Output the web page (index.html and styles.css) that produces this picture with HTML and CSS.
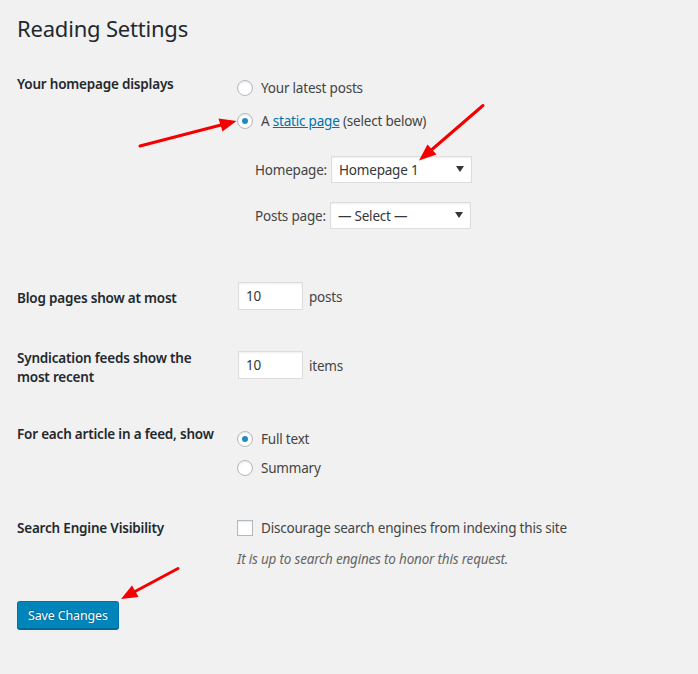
FILE: index.html
```html
<!DOCTYPE html>
<html lang="en">
<head>
<meta charset="utf-8">
<title>Reading Settings</title>
<link rel="stylesheet" href="styles.css">
</head>
<body>
<div class="wrap">
  <h1 class="title">Reading Settings</h1>
  <form class="form">
    <div class="row row-1">
      <div class="th">Your homepage displays</div>
      <div class="td">
        <label class="choice"><span class="radio"></span><span>Your latest posts</span></label>
        <label class="choice choice-2"><span class="radio checked"></span><span>A <a href="#" class="link">static page</a> (select below)</span></label>
        <div class="sel-row sel-row-1">
          <span class="sel-label">Homepage:</span>
          <div class="select"><span>Homepage 1</span><svg class="caret" width="8" height="6" viewBox="0 0 8 6"><path d="M0 0H8L4 6Z" fill="#32373c"/></svg></div>
        </div>
        <div class="sel-row sel-row-2">
          <span class="sel-label">Posts page:</span>
          <div class="select select-2"><span>— Select —</span><svg class="caret" width="8" height="6" viewBox="0 0 8 6"><path d="M0 0H8L4 6Z" fill="#32373c"/></svg></div>
        </div>
      </div>
    </div>
    <div class="row row-2">
      <div class="th">Blog pages show at most</div>
      <div class="td inline"><span class="num">10</span><span class="unit">posts</span></div>
    </div>
    <div class="row row-3">
      <div class="th th-2line">Syndication feeds show the most recent</div>
      <div class="td inline"><span class="num">10</span><span class="unit">items</span></div>
    </div>
    <div class="row row-4">
      <div class="th">For each article in a feed, show</div>
      <div class="td">
        <label class="choice"><span class="radio checked"></span><span>Full text</span></label>
        <label class="choice choice-s"><span class="radio"></span><span>Summary</span></label>
      </div>
    </div>
    <div class="row row-5">
      <div class="th">Search Engine Visibility</div>
      <div class="td">
        <label class="choice"><span class="checkbox"></span><span>Discourage search engines from indexing this site</span></label>
        <p class="desc">It is up to search engines to honor this request.</p>
      </div>
    </div>
    <div class="submit"><span class="button">Save Changes</span></div>
  </form>
</div>
<svg class="arrows" width="698" height="674" viewBox="0 0 698 674">
  <g stroke="#f40000" stroke-width="3" stroke-linecap="round" fill="none">
    <line x1="140" y1="146" x2="221" y2="125"/>
    <line x1="483" y1="105.5" x2="432" y2="149.5"/>
    <line x1="178" y1="568.5" x2="135" y2="591.5"/>
  </g>
  <g fill="#f40000">
    <polygon points="236.5,121 222.5,131.5 218.5,118.5"/>
    <polygon points="419,160.5 436.5,154.5 427.5,144.5"/>
    <polygon points="121,599 138.5,597 132,585.5"/>
  </g>
</svg>
</body>
</html>
```
FILE: styles.css
```css
html, body {
  margin: 0;
  padding: 0;
}
body {
  background: #f1f1f1;
  font-family: "Noto Sans", "Open Sans", sans-serif;
  font-size: 13.5px;
  letter-spacing: -0.2px;
  line-height: 20px;
  color: #444;
  width: 698px;
  height: 674px;
  overflow: hidden;
  position: relative;
}
.wrap {
  padding: 0 17px;
}
.title {
  margin: 14px 0 0;
  font-size: 22px;
  letter-spacing: -0.2px;
  line-height: 29px;
  font-weight: 400;
  color: #23282d;
}
.form {
  margin: 0;
}
.row {
  display: grid;
  grid-template-columns: 220px 1fr;
  align-items: start;
}
.th {
  font-weight: 600;
  color: #23282d;
}
.th-2line {
  line-height: 19px;
  width: 190px;
}
.row-1 { margin-bottom: 33px; }
.row-1 .th { padding-top: 31px; }
.row-1 .td { padding-top: 35px; }
.row-2 { margin-bottom: 17px; }
.row-2 .th { padding-top: 26px; }
.row-2 .td { padding-top: 20px; }
.row-3 { margin-bottom: 18px; }
.row-3 .th { padding-top: 22px; }
.row-3 .td { padding-top: 24px; }
.row-4 { margin-bottom: 19px; }
.row-4 .th { padding-top: 19px; }
.row-4 .td { padding-top: 24px; }
.row-5 .th { padding-top: 21px; }
.row-5 .td { padding-top: 21px; }

.choice {
  display: flex;
  align-items: center;
  gap: 8px;
  height: 20px;
}
.choice-2 { margin-top: 13px; }
.choice-s { margin-top: 9px; }

.radio {
  box-sizing: border-box;
  width: 16px;
  height: 16px;
  border: 1px solid #b4b9be;
  border-radius: 50%;
  background: #fff;
  box-shadow: inset 0 1px 2px rgba(0, 0, 0, 0.1);
  display: flex;
  align-items: center;
  justify-content: center;
  flex: none;
}
.radio.checked::before {
  content: "";
  width: 6px;
  height: 6px;
  border-radius: 50%;
  background: #1e8cbe;
}
.checkbox {
  box-sizing: border-box;
  width: 16px;
  height: 16px;
  border: 1px solid #b4b9be;
  background: #fff;
  box-shadow: inset 0 1px 2px rgba(0, 0, 0, 0.1);
  flex: none;
}
.link {
  color: #0073aa;
  text-decoration: underline;
}

.sel-row {
  display: flex;
  align-items: center;
  gap: 4px;
  padding-left: 18px;
}
.sel-row-1 { margin-top: 25px; }
.sel-row-2 { margin-top: 19px; }
.sel-label {
  color: #444;
}
.select {
  box-sizing: border-box;
  width: 141px;
  height: 27px;
  border: 1px solid #ddd;
  background: #fff;
  box-shadow: inset 0 1px 2px rgba(0, 0, 0, 0.07);
  display: flex;
  align-items: center;
  justify-content: space-between;
  padding: 0 7px 0 7px;
  color: #32373c;
}
.caret {
  display: block;
  margin-top: -1px;
}

.inline {
  display: flex;
  align-items: center;
  gap: 6px;
}
.num {
  box-sizing: border-box;
  width: 65px;
  height: 28px;
  border: 1px solid #ddd;
  background: #fff;
  box-shadow: inset 0 1px 2px rgba(0, 0, 0, 0.07);
  padding: 0 7px;
  line-height: 27px;
  color: #32373c;
  margin-left: 1px;
}
.unit {
  color: #444;
  padding-top: 1px;
}

.desc {
  margin: 11px 0 0;
  font-style: italic;
  color: #666;
}
.submit {
  margin-top: 32px;
}
.button {
  display: inline-block;
  box-sizing: border-box;
  height: 28px;
  padding: 0 10px;
  line-height: 27px;
  font-size: 12.5px;
  letter-spacing: -0.15px;
  color: #fff;
  background: #0085ba;
  border: 1px solid #0073aa;
  border-bottom-color: #006799;
  border-radius: 3px;
  box-shadow: 0 1px 0 #006799;
  text-shadow: 0 -1px 1px #006799, 1px 0 1px #006799;
}
.arrows {
  position: absolute;
  top: 0;
  left: 0;
  pointer-events: none;
}
```
